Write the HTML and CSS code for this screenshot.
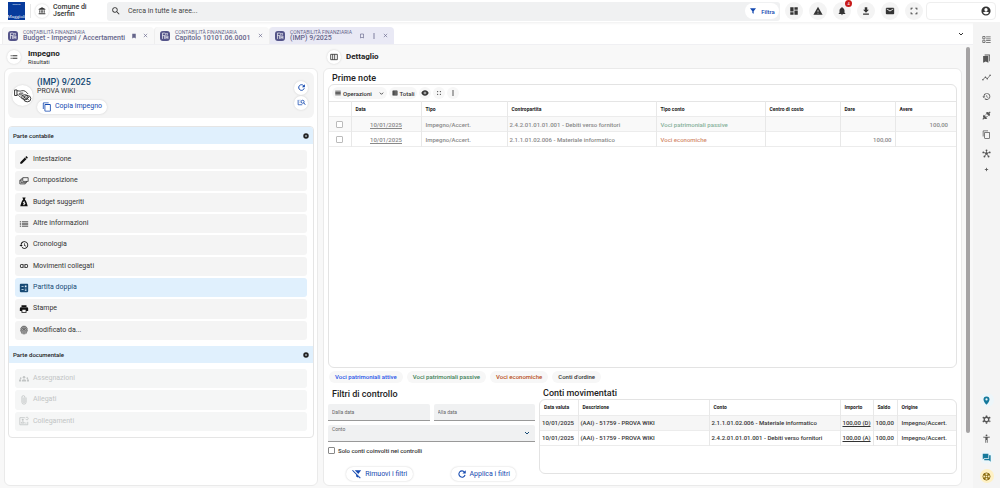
FILE: index.html
```html
<!DOCTYPE html>
<html lang="it">
<head>
<meta charset="utf-8">
<meta name="viewport" content="width=device-width, initial-scale=1">
<title>Impegno - Contabilità finanziaria</title>
<link rel="stylesheet" href="styles.css">
</head>
<body>
<svg class="defs" aria-hidden="true">
<symbol id="bank" viewBox="0 0 24 24"><path d="M4 10v7h3v-7H4zm6 0v7h4v-7h-4zM2 22h20v-3H2v3zm15-12v7h3v-7h-3zM12 1L2 6v2h20V6L12 1z"/></symbol>
<symbol id="search" viewBox="0 0 24 24"><path d="M15.5 14h-.79l-.28-.27A6.47 6.47 0 0 0 16 9.500 6.500 6.500 0 1 0 9.500 16c1.610 0 3.090-.59 4.230-1.570l.27.28v.79l5 4.990L20.490 19l-4.990-5zm-6 0C7.010 14 5 11.990 5 9.500S7.010 5 9.500 5 14 7.010 14 9.500 11.990 14 9.500 14z"/></symbol>
<symbol id="filter" viewBox="0 0 24 24"><path d="M3 4h18l-7 9v7l-4-2v-5z"/></symbol>
<symbol id="dash" viewBox="0 0 24 24"><path d="M3 13h8V3H3v10zm0 8h8v-6H3v6zm10 0h8V11h-8v10zm0-18v6h8V3h-8z"/></symbol>
<symbol id="warn" viewBox="0 0 24 24"><path d="M1 21h22L12 2 1 21zm12-3h-2v-2h2v2zm0-4h-2v-4h2v4z"/></symbol>
<symbol id="bell" viewBox="0 0 24 24"><path d="M12 22c1.100 0 2-.9 2-2h-4a2 2 0 0 0 2 2zm6-6v-5c0-3.070-1.640-5.640-4.500-6.320V4a1.500 1.500 0 0 0-3 0v.68C7.630 5.360 6 7.920 6 11v5l-2 2v1h16v-1l-2-2z"/></symbol>
<symbol id="down" viewBox="0 0 24 24"><path d="M19 9h-4V3H9v6H5l7 7 7-7zM5 18v3h14v-3H5z"/></symbol>
<symbol id="mail" viewBox="0 0 24 24"><path d="M20 4H4a2 2 0 0 0-2 2v12c0 1.100.9 2 2 2h16a2 2 0 0 0 2-2V6a2 2 0 0 0-2-2zm0 4l-8 5-8-5V6l8 5 8-5v2z"/></symbol>
<symbol id="full" viewBox="0 0 24 24"><path d="M4 9V4h5v2H6v3zm11-5h5v5h-2V6h-3zM4 15h2v3h3v2H4zm14 0h2v5h-5v-2h3z"/></symbol>
<symbol id="user" viewBox="0 0 24 24"><path fill-rule="evenodd" d="M12 1a11 11 0 1 0 0 22 11 11 0 0 0 0-22zm0 4a4 4 0 1 1 0 8 4 4 0 0 1 0-8zm0 15c-3 0-5.500-1.500-7-3.600C5 14.500 9.500 14 12 14s7 .5 7 2.400A8.500 8.500 0 0 1 12 20z"/></symbol>
<symbol id="app" viewBox="0 0 24 24"><rect width="24" height="24" rx="7"/><path d="M6 19V5h5a3 3 0 0 1 0 6H6m5 0v8M14 19v-7h5v7m-5-3h5M15 6h3v3" fill="none" stroke="#fff" stroke-width="1.600"/></symbol>
<symbol id="mark" viewBox="0 0 24 24"><path d="M5 3h14v19l-7-4-7 4z"/></symbol>
<symbol id="marko" viewBox="0 0 24 24"><path d="M6 4h12v16l-6-3-6 3z" fill="none" stroke="currentColor" stroke-width="2.500"/></symbol>
<symbol id="x" viewBox="0 0 24 24"><path d="M4 4l16 16M20 4L4 20" stroke="currentColor" stroke-width="3"/></symbol>
<symbol id="dots" viewBox="0 0 24 24"><circle cx="12" cy="4" r="3"/><circle cx="12" cy="12" r="3"/><circle cx="12" cy="20" r="3"/></symbol>
<symbol id="chev" viewBox="0 0 24 24"><path d="M4 8l8 8 8-8" fill="none" stroke="currentColor" stroke-width="4"/></symbol>
<symbol id="list" viewBox="0 0 24 24"><path d="M2 6h3v2H2zm0 5h3v2H2zm0 5h3v2H2zM7 6h15v2H7zm0 5h15v2H7zm0 5h15v2H7z"/></symbol>
<symbol id="menu" viewBox="0 0 24 24"><path d="M1 3h22v2.500H1zm0 5h22v2.500H1zm0 5h22v2.500H1zm0 5h22v2.500H1z"/></symbol>
<symbol id="cols" viewBox="0 0 24 24"><path d="M2 4h20v16H2zM8 4v16M14 4v16" fill="none" stroke="currentColor" stroke-width="2.500"/></symbol>
<symbol id="hand" viewBox="0 0 24 24"><g fill="none" stroke="#333" stroke-width="1.200"><path d="M2 5h3v7H2zM5 6c2 0 4 1 6 0 4-1 6 2 8 4M5 11c3 0 3 3 7 5m1-7H9c-2 0-1 3 1 2l3 1"/><ellipse cx="15" cy="14" rx="4" ry="3"/><ellipse cx="18" cy="16" rx="4.500" ry="4"/><path d="M16 14l4 4M20 14l-4 4M13 13l3 3"/></g></symbol>
<symbol id="copy" viewBox="0 0 24 24"><path d="M16 1H4a2 2 0 0 0-2 2v14h2V3h12V1zm3 4H8a2 2 0 0 0-2 2v14c0 1.100.9 2 2 2h11a2 2 0 0 0 2-2V7a2 2 0 0 0-2-2zm0 16H8V7h11v14z"/></symbol>
<symbol id="fresh" viewBox="0 0 24 24"><path d="M18 7.500A7.500 7.500 0 1 0 19.300 14" fill="none" stroke="currentColor" stroke-width="2.600"/><path d="M21 3v8h-8z"/></symbol>
<symbol id="find" viewBox="0 0 24 24"><path d="M3 5v13M7 6h2M7 11h2M3 18h11" fill="none" stroke="currentColor" stroke-width="2"/><circle cx="15" cy="10" r="4" fill="none" stroke="currentColor" stroke-width="2.200"/><path d="M18 13l4 5" stroke="currentColor" stroke-width="2.500"/></symbol>
<symbol id="minus" viewBox="0 0 24 24"><path fill-rule="evenodd" d="M12 1a11 11 0 1 0 0 22 11 11 0 0 0 0-22zM8 10h8v4H8z"/></symbol>
<symbol id="pen" viewBox="0 0 24 24"><path d="M3 17.250V21h3.750L17.810 9.940l-3.750-3.750L3 17.250zM20.710 7.040a1 1 0 0 0 0-1.410l-2.340-2.340a1 1 0 0 0-1.410 0l-1.830 1.830 3.750 3.750 1.830-1.830z"/></symbol>
<symbol id="layers" viewBox="0 0 24 24"><path d="M9 4h13v9H9zM9 7H5v9h13v-3M5 10H2v9h13v-3" fill="none" stroke="currentColor" stroke-width="1.600"/></symbol>
<symbol id="bag" viewBox="0 0 24 24"><path fill-rule="evenodd" d="M8 1h8l-2 5c3 3 5 8 7 16H3C5 14 7 9 10 6zm4 9l-3 4 3 1-3 3h2v2h2v-2l3-2-3-2 2-2z"/></symbol>
<symbol id="hist" viewBox="0 0 24 24"><path d="M13 3a9 9 0 0 0-9 9H1l3.890 3.890.07.14L9 12H6a7 7 0 1 1 2.060 4.940l-1.420 1.420A9 9 0 1 0 13 3zm-1 5v5l4.280 2.540.72-1.210-3.500-2.080V8H12z"/></symbol>
<symbol id="link" viewBox="0 0 24 24"><path d="M3.900 12A3.100 3.100 0 0 1 7 8.900h4V7H7a5 5 0 0 0 0 10h4v-1.900H7A3.100 3.100 0 0 1 3.900 12zM8 13h8v-2H8v2zm9-6h-4v1.900h4a3.100 3.100 0 0 1 0 6.200h-4V17h4a5 5 0 0 0 0-10z"/></symbol>
<symbol id="calc" viewBox="0 0 24 24"><path fill-rule="evenodd" d="M4 2h16a2 2 0 0 1 2 2v16a2 2 0 0 1-2 2H4a2 2 0 0 1-2-2V4a2 2 0 0 1 2-2zm2 5v2h5V7zm8-1v4h4V6zm-8 9v2h5v-2zm8-1v1.500h4V14zm0 3v1.500h4V17z"/></symbol>
<symbol id="print" viewBox="0 0 24 24"><path fill-rule="evenodd" d="M19 8H5a3 3 0 0 0-3 3v6h4v4h12v-4h4v-6a3 3 0 0 0-3-3zm-3 11H8v-5h8v5zM18 3H6v4h12V3z"/></symbol>
<symbol id="finger" viewBox="0 0 24 24"><ellipse cx="12" cy="12" rx="9" ry="11" opacity=".3"/><path d="M4 9c3-7 13-7 16 0M4 15c0-10 16-10 16 0M7 20c-2-13 12-13 10 0M12 22V12" fill="none" stroke="currentColor" stroke-width="1"/></symbol>
<symbol id="group" viewBox="0 0 24 24"><circle cx="12" cy="8" r="3"/><circle cx="4" cy="10" r="2"/><circle cx="20" cy="10" r="2"/><path d="M7 18v-3c2-3 8-3 10 0v3zM0 18v-3c0-2 3-3 5-2v5zm24 0v-3c0-2-3-3-5-2v5z"/></symbol>
<symbol id="clip" viewBox="0 0 24 24"><path d="M17 6v11a5 5 0 0 1-10 0V5a3.500 3.500 0 0 1 7 0v11a2 2 0 0 1-4 0V6" fill="none" stroke="currentColor" stroke-width="2"/></symbol>
<symbol id="card" viewBox="0 0 24 24"><path d="M14 4H2v17h19v-7M5 17c0-4 8-4 8 0zM15 17h3M16 5c2-4 6-2 6 1s-4 5-6 1" fill="none" stroke="currentColor" stroke-width="2"/><circle cx="9" cy="9" r="2.500"/></symbol>
<symbol id="eye" viewBox="0 0 24 24"><path fill-rule="evenodd" d="M12 4C7 4 3 7 1 12c2 5 6 8 11 8s9-3 11-8c-2-5-6-8-11-8zm0 4a4 4 0 1 1 0 8 4 4 0 0 1 0-8z"/><circle cx="12" cy="12" r="2.500"/></symbol>
<symbol id="nofilter" viewBox="0 0 24 24"><path d="M6 3h16l-7 9v9l-5-3v-6z"/><path d="M3 2l18 19" stroke="#fff" stroke-width="4"/><path d="M1 3l19 19" stroke="currentColor" stroke-width="2.500"/></symbol>
<symbol id="tasks" viewBox="0 0 24 24"><path d="M2 4h6v6H2zM2 14h6v6H2z" fill="none" stroke="currentColor" stroke-width="2"/><path d="M11 4h12v2H11zm0 5h12v2H11zm0 5h12v2H11zm0 5h12v2H11z"/></symbol>
<symbol id="marks" viewBox="0 0 24 24"><path d="M7 1h14v18h-2V4H7zM3 5h14v18l-7-3-7 3z"/></symbol>
<symbol id="trend" viewBox="0 0 24 24"><path d="M2 18l7-7 5 4 8-9" fill="none" stroke="currentColor" stroke-width="2"/><circle cx="2.500" cy="18" r="2"/><circle cx="9" cy="11" r="2"/><circle cx="14" cy="15" r="2"/><circle cx="21.500" cy="6" r="2"/></symbol>
<symbol id="plug" viewBox="0 0 24 24"><path d="M5 10l9 9c-3 3-6 3-8 1l-3 3-2-2 3-3c-2-2-2-5 1-8zM10 5c3-3 6-3 8-1l3-3 2 2-3 3c2 2 2 5-1 8z"/><path d="M8 12l3-3M12 16l3-3" stroke="currentColor" stroke-width="2.500"/></symbol>
<symbol id="hub" viewBox="0 0 24 24"><path d="M12 12V4M12 12L4 9M12 12l8-3M12 12l-5 8M12 12l5 8" stroke="currentColor" stroke-width="2"/><circle cx="12" cy="12" r="3.500"/><circle cx="12" cy="3.500" r="2.500"/><circle cx="3.500" cy="9" r="2.500"/><circle cx="20.500" cy="9" r="2.500"/><circle cx="6.500" cy="20" r="2.500"/><circle cx="17.500" cy="20" r="2.500"/></symbol>
<symbol id="plus" viewBox="0 0 24 24"><path d="M12 4v16M4 12h16" stroke="currentColor" stroke-width="4"/></symbol>
<symbol id="pin" viewBox="0 0 24 24"><path fill-rule="evenodd" d="M12 1a8 8 0 0 0-8 8c0 6 8 14 8 14s8-8 8-14a8 8 0 0 0-8-8zm0 5a3 3 0 1 1 0 6 3 3 0 0 1 0-6z"/></symbol>
<symbol id="gear" viewBox="0 0 24 24"><circle cx="12" cy="12" r="6" fill="none" stroke="currentColor" stroke-width="3.500"/><path d="M10 1h4v4h-4zm0 18h4v4h-4zM1 8l2-4 4 3-2 3zm18 9l2 3 2-4-3-2zM21 4l2 4-3 2-3-3zM1 16l2 4 4-3-2-3z"/></symbol>
<symbol id="person" viewBox="0 0 24 24"><circle cx="12" cy="3.500" r="2.500"/><path d="M3 7h18v2l-6 1v13h-2v-7h-2v7H9V10L3 9z"/></symbol>
<symbol id="chat" viewBox="0 0 24 24"><path d="M2 2h15v11H6l-4 4zM19 6h4v17l-4-4H6v-4h13z"/></symbol>
<symbol id="wheel" viewBox="0 0 24 24"><circle cx="12" cy="12" r="9.500" fill="none" stroke="currentColor" stroke-width="2.500"/><circle cx="12" cy="12" r="3" fill="none" stroke="currentColor" stroke-width="2"/><path d="M5 5l5 5M19 5l-5 5M5 19l5-5M19 19l-5-5" stroke="currentColor" stroke-width="4.500"/></symbol>
</svg>

<header class="topbar">
  <div class="logo"><small>GRUPPO</small><b>Maggioli</b></div>
  <div class="entity"><span class="round"><svg class="icon small"><use href="#bank"/></svg></span><strong>Comune di<br>Jserfin</strong></div>
  <div class="search"><svg class="icon"><use href="#search"/></svg><input type="search" aria-label="Cerca" placeholder="Cerca in tutte le aree..."><button class="filter"><svg class="icon small"><use href="#filter"/></svg>Filtra</button></div>
  <nav class="tools" aria-label="Strumenti">
    <button class="round" aria-label="Cruscotto"><svg class="icon"><use href="#dash"/></svg></button>
    <button class="round" aria-label="Avvisi"><svg class="icon"><use href="#warn"/></svg></button>
    <button class="round alert" aria-label="Notifiche"><svg class="icon"><use href="#bell"/></svg><span class="badge">4</span></button>
    <button class="round" aria-label="Scarica"><svg class="icon"><use href="#down"/></svg></button>
    <button class="round" aria-label="Posta"><svg class="icon"><use href="#mail"/></svg></button>
    <button class="round" aria-label="Schermo intero"><svg class="icon"><use href="#full"/></svg></button>
  </nav>
  <button class="account" aria-label="Utente"><svg class="icon"><use href="#user"/></svg></button>
</header>

<div class="shell">
<div class="work">
  <nav class="tabs" aria-label="Schede">
    <div class="tab wide"><svg class="app"><use href="#app"/></svg><a href="#budget"><small>CONTABILITÀ FINANZIARIA</small><b>Budget - Impegni / Accertamenti</b></a><button aria-label="Segnalibro"><svg class="icon tiny"><use href="#mark"/></svg></button><button aria-label="Chiudi"><svg class="icon mini"><use href="#x"/></svg></button></div>
    <div class="tab"><svg class="app"><use href="#app"/></svg><a href="#capitolo"><small>CONTABILITÀ FINANZIARIA</small><b>Capitolo 10101.06.0001</b></a><button aria-label="Chiudi"><svg class="icon mini"><use href="#x"/></svg></button></div>
    <div class="tab active"><svg class="app"><use href="#app"/></svg><a href="#imp"><small>CONTABILITÀ FINANZIARIA</small><b>(IMP) 9/2025</b></a><button aria-label="Segnalibro"><svg class="icon tiny"><use href="#marko"/></svg></button><button aria-label="Altro"><svg class="icon tiny"><use href="#dots"/></svg></button><button aria-label="Chiudi"><svg class="icon mini"><use href="#x"/></svg></button></div>
    <button class="more" aria-label="Altre schede"><svg class="icon tiny"><use href="#chev"/></svg></button>
  </nav>

  <main class="page">
  <div class="split">
    <section class="side">
      <div class="heading"><button class="round" aria-label="Elenco"><svg class="icon"><use href="#list"/></svg></button><div><h1>Impegno</h1><p>Risultati</p></div></div>
      <div class="panel side-panel">
        <div class="record">
          <span class="round avatar"><svg><use href="#hand"/></svg></span>
          <div class="info"><h2>(IMP) 9/2025</h2><p>PROVA WIKI</p><button class="pill"><svg class="icon"><use href="#copy"/></svg>Copia impegno</button></div>
          <div class="actions"><button class="round" aria-label="Aggiorna"><svg class="icon"><use href="#fresh"/></svg></button><button class="round" aria-label="Trova"><svg class="icon"><use href="#find"/></svg></button></div>
        </div>
        <div class="accordion">
          <button class="group">Parte contabile<svg class="icon small"><use href="#minus"/></svg></button>
          <div class="entries nine">
            <a href="#intestazione"><svg class="icon"><use href="#pen"/></svg>Intestazione</a>
            <a href="#composizione"><svg class="icon"><use href="#layers"/></svg>Composizione</a>
            <a href="#suggeriti"><svg class="icon"><use href="#bag"/></svg>Budget suggeriti</a>
            <a href="#altre"><svg class="icon"><use href="#list"/></svg>Altre informazioni</a>
            <a href="#cronologia"><svg class="icon"><use href="#hist"/></svg>Cronologia</a>
            <a href="#movimenti"><svg class="icon"><use href="#link"/></svg>Movimenti collegati</a>
            <a href="#partita" class="current"><svg class="icon"><use href="#calc"/></svg>Partita doppia</a>
            <a href="#stampe"><svg class="icon"><use href="#print"/></svg>Stampe</a>
            <a href="#modificato"><svg class="icon"><use href="#finger"/></svg>Modificato da...</a>
          </div>
          <button class="group">Parte documentale<svg class="icon small"><use href="#minus"/></svg></button>
          <div class="entries three">
            <a href="#assegnazioni"><svg class="icon"><use href="#group"/></svg>Assegnazioni</a>
            <a href="#allegati"><svg class="icon"><use href="#clip"/></svg>Allegati</a>
            <a href="#collegamenti"><svg class="icon"><use href="#card"/></svg>Collegamenti</a>
          </div>
        </div>
      </div>
    </section>

    <section class="detail">
      <div class="heading"><button class="round" aria-label="Colonne"><svg class="icon"><use href="#cols"/></svg></button><h1>Dettaglio</h1></div>
      <div class="panel detail-panel">
        <h2>Prime note</h2>
        <div class="box notes">
          <div class="toolbar">
            <button class="ops"><svg class="icon tiny"><use href="#menu"/></svg>Operazioni<svg class="icon mini end"><use href="#chev"/></svg></button>
            <button class="totals"><svg class="icon tiny"><use href="#calc"/></svg>Totali</button>
            <button aria-label="Mostra"><svg class="icon small"><use href="#eye"/></svg></button>
            <button aria-label="Espandi"><svg class="icon tiny"><use href="#full"/></svg></button>
            <button aria-label="Altro"><svg class="icon tiny"><use href="#dots"/></svg></button>
          </div>
          <table>
            <colgroup><col class="c-check"><col class="c-date"><col class="c-type"><col><col class="c-kind"><col class="c-cost"><col class="c-debit"><col class="c-credit"></colgroup>
            <thead><tr><th></th><th>Data</th><th>Tipo</th><th>Contropartita</th><th>Tipo conto</th><th>Centro di costo</th><th>Dare</th><th>Avere</th></tr></thead>
            <tbody>
              <tr><td class="center"><input type="checkbox" aria-label="Seleziona riga 1"></td><td class="center"><a href="#n1">10/01/2025</a></td><td>Impegno/Accert.</td><td class="code">2.4.2.01.01.01.001 - Debiti verso fornitori</td><td class="green">Voci patrimoniali passive</td><td></td><td></td><td class="num">100,00</td></tr>
              <tr><td class="center"><input type="checkbox" aria-label="Seleziona riga 2"></td><td class="center"><a href="#n2">10/01/2025</a></td><td>Impegno/Accert.</td><td class="code">2.1.1.01.02.006 - Materiale informatico</td><td class="orange">Voci economiche</td><td></td><td class="num tight">100,00</td><td></td></tr>
            </tbody>
          </table>
        </div>
        <div class="chips"><span class="blue">Voci patrimoniali attive</span><span class="green">Voci patrimoniali passive</span><span class="orange">Voci economiche</span><span>Conti d'ordine</span></div>
        <div class="lower">
          <form class="filters">
            <h2>Filtri di controllo</h2>
            <div class="dates"><input type="text" aria-label="Dalla data" placeholder="Dalla data"><input type="text" aria-label="Alla data" placeholder="Alla data"></div>
            <div class="select"><label for="conto">Conto</label><select id="conto"><option></option></select><svg class="icon"><use href="#chev"/></svg></div>
            <label class="check"><input type="checkbox">Solo conti coinvolti nei controlli</label>
            <div class="buttons"><button type="button" class="pill"><svg class="icon"><use href="#nofilter"/></svg>Rimuovi i filtri</button><button type="button" class="pill"><svg class="icon"><use href="#fresh"/></svg>Applica i filtri</button></div>
          </form>
          <div class="moved">
            <h2>Conti movimentati</h2>
            <div class="box accounts">
              <table>
                <colgroup><col class="a-date"><col><col><col class="a-amount"><col class="a-balance"><col class="a-origin"></colgroup>
                <thead><tr><th>Data valuta</th><th>Descrizione</th><th>Conto</th><th>Importo</th><th>Saldo</th><th>Origine</th></tr></thead>
                <tbody>
                  <tr><td>10/01/2025</td><td>(AAI) - 51759 - PROVA WIKI</td><td>2.1.1.01.02.006 - Materiale informatico</td><td><a href="#m1">100,00 (D)</a></td><td>100,00</td><td class="origin">Impegno/Accert.</td></tr>
                  <tr><td>10/01/2025</td><td>(AAI) - 51759 - PROVA WIKI</td><td>2.4.2.01.01.01.001 - Debiti verso fornitori</td><td><a href="#m2">100,00 (A)</a></td><td>100,00</td><td class="origin">Impegno/Accert.</td></tr>
                </tbody>
              </table>
            </div>
          </div>
        </div>
      </div>
    </section>
  </div>
  <div class="track"><div class="thumb"></div></div>
  </main>
</div>
<aside class="rail">
  <button aria-label="Attività"><svg class="icon"><use href="#tasks"/></svg></button>
  <button aria-label="Segnalibri"><svg class="icon"><use href="#marks"/></svg></button>
  <button aria-label="Andamento"><svg class="icon"><use href="#trend"/></svg></button>
  <button aria-label="Cronologia"><svg class="icon"><use href="#hist"/></svg></button>
  <button aria-label="Connessioni"><svg class="icon"><use href="#plug"/></svg></button>
  <button aria-label="Copia"><svg class="icon"><use href="#copy"/></svg></button>
  <button aria-label="Rete"><svg class="icon"><use href="#hub"/></svg></button>
  <button class="add" aria-label="Aggiungi"><svg class="icon mini"><use href="#plus"/></svg></button>
  <button class="push teal" aria-label="Posizione"><svg class="icon"><use href="#pin"/></svg></button>
  <button aria-label="Impostazioni"><svg class="icon"><use href="#gear"/></svg></button>
  <button aria-label="Accessibilità"><svg class="icon"><use href="#person"/></svg></button>
  <button class="teal" aria-label="Messaggi"><svg class="icon"><use href="#chat"/></svg></button>
  <button class="help" aria-label="Assistenza"><svg class="icon"><use href="#wheel"/></svg></button>
</aside>
</div>
</body>
</html>
```

FILE: styles.css
```css
* { box-sizing: border-box; }
body { margin: 0; min-height: 100vh; display: flex; flex-direction: column; background: #fff; color: #333; font: 7px/9px Roboto, "Liberation Sans", sans-serif; }
h1, h2, p { margin: 0; }
h1 { font-size: 8px; line-height: 9px; font-weight: 700; color: #222; }
h2 { font-size: 9px; line-height: 12px; font-weight: 500; color: #222; }
button, input, select { font: inherit; color: inherit; margin: 0; }
button { border: 0; padding: 0; background: none; display: inline-flex; align-items: center; justify-content: center; cursor: pointer; white-space: nowrap; }
a { color: inherit; }
.defs { position: absolute; width: 0; height: 0; }
.icon { width: 10px; height: 10px; flex: none; fill: currentColor; display: block; }
.icon.small { width: 8px; height: 8px; }
.icon.tiny { width: 6px; height: 6px; }
.icon.mini { width: 5px; height: 5px; }
.round { display: flex; align-items: center; justify-content: center; width: 14px; height: 14px; border-radius: 50%; background: #fff; box-shadow: 0 0 2px #ccc; flex: none; }

.topbar { display: flex; align-items: center; height: 22px; padding: 0 4px 0 8px; background: #fff; position: relative; }
.logo { width: 17px; height: 18px; background: #073b9c; color: #fff; display: flex; flex-direction: column; justify-content: space-between; align-items: center; overflow: hidden; }
.logo small { font-size: 2px; line-height: 5px; }
.logo b { font: 5px/6px "Liberation Serif", serif; }
.entity { display: flex; align-items: center; gap: 4px; margin-left: 5px; padding-left: 4px; width: 77px; border-left: 1px solid #e8e8e8; }
.entity strong { font-size: 7px; line-height: 7px; font-weight: 500; }
.search { flex: 1; display: flex; align-items: center; height: 19px; padding: 0 1px 0 4px; background: #f0f1f2; border-radius: 3px; }
.search input { flex: 1; border: 0; background: none; padding: 0 0 0 7px; outline: 0; }
.search input::placeholder { color: #444; opacity: 1; }
.filter { width: 34px; height: 16px; gap: 4px; border-radius: 8px; background: #fff; color: #1449b0; font-weight: 500; font-size: 6px; }
.tools { display: flex; gap: 6px; margin: 0 3px 0 5px; }
.tools .round { width: 18px; height: 18px; background: #f4f4f4; box-shadow: none; }
.alert { position: relative; }
.badge { position: absolute; right: -1px; top: -2px; width: 7px; height: 7px; border-radius: 50%; background: #c71a1a; color: #fff; font-size: 4px; line-height: 7px; text-align: center; }
.account { width: 70px; height: 18px; border-radius: 4px; border: 1px solid #eee; justify-content: flex-end; padding-right: 4px; background: #fff; }

.shell { flex: 1; display: flex; }
.work { flex: 1; min-width: 0; display: flex; flex-direction: column; box-shadow: inset 0 3px 3px -2px #eee; }
.tabs { display: flex; height: 23px; padding: 5px 0 0 2px; border-bottom: 1px solid #f0f0f3; }
.tab { display: flex; align-items: center; gap: 5px; width: 115px; padding: 0 6px 0 5px; background: #f8f8f8; color: #65658a; border-left: 1px solid #eee; border-radius: 4px 4px 0 0; }
.tab.wide { width: 152px; }
.tab.active { width: 125px; background: #e9e9f5; }
.tab a { text-decoration: none; flex: 1; white-space: nowrap; }
.tab small { display: block; font-size: 5px; line-height: 6px; }
.tab b { display: block; font-size: 7px; line-height: 7px; font-weight: 500; }
.app { width: 10px; height: 10px; fill: #55558a; flex: none; }
.tab.wide button:last-child, .tab button + button { margin-left: 1px; }
.more { margin: 0 9px 4px auto; }

.page { flex: 1; display: flex; background: #f8f8f8; padding: 0 2px 2px 4px; }
.split { flex: 1; min-width: 0; display: grid; grid-template-columns: minmax(0, 314fr) minmax(0, 639fr); gap: 5px; }
.side, .detail { display: flex; flex-direction: column; }
.heading { height: 23px; display: flex; align-items: center; gap: 5px; padding: 0 3px; }
.heading .icon { width: 8px; height: 8px; }
.side .heading { gap: 7px; }
.detail .heading { padding-left: 4px; }
.heading p { font-size: 6px; line-height: 7px; }
.panel { flex: 1; background: #fff; border: 1px solid #eaeaea; border-radius: 6px; }
.side-panel { padding: 3px; }
.record { display: flex; align-items: center; height: 46px; padding: 0 6px 0 4px; gap: 4px; background: #f4f4f4; border-radius: 6px; }
.avatar { width: 21px; height: 21px; }
.avatar svg { width: 19px; height: 19px; }
.info { flex: 1; display: flex; flex-direction: column; align-items: flex-start; }
.info h2 { line-height: 10px; color: #174a75; }
.info p { line-height: 9px; }
.info .pill { margin-top: 4px; padding: 0 5px; }
.actions { display: grid; gap: 1px; color: #1449b0; }
.actions .icon { width: 9px; height: 9px; }
.pill { height: 14px; gap: 3px; border-radius: 7px; background: #fff; box-shadow: 0 0 2px #ccc; color: #1449b0; }
.accordion { margin-top: 8px; border: 1px solid #e5e5e5; border-radius: 4px; overflow: hidden; }
.group { width: 100%; height: 17px; padding: 0 4px; justify-content: space-between; background: #e0f0fd; font-size: 6px; font-weight: 500; color: #222; }
.group .icon { width: 6px; height: 6px; }
.entries { display: flex; flex-direction: column; gap: 2px; padding: 6px; }
.nine { min-height: 202px; }
.three { min-height: 74px; }
.entries a { flex: 1; display: flex; align-items: center; gap: 4px; padding: 0 4px; border-radius: 3px; background: #f4f4f4; text-decoration: none; }
.entries .icon { color: #111; }
.entries .current, .current .icon { background: #e0f0fd; color: #174a75; }
.three a { background: #f5f6f6; color: #c2c5c5; }
.three .icon { color: #c2c5c5; }

.detail-panel { display: flex; flex-direction: column; padding: 3px 4px; }
.detail-panel > h2, .moved h2 { padding-left: 4px; }
.box { border: 1px solid #e3e3e3; border-radius: 6px; overflow: hidden; }
.notes { flex: 1; }
.toolbar { display: flex; gap: 2px; align-items: center; height: 16px; padding: 0 3px; }
.toolbar button { min-width: 12px; height: 12px; border-radius: 6px; background: #f7f7f7; font-size: 6px; font-weight: 500; gap: 2px; padding: 0 2px; }
.toolbar .ops { width: 55px; }
.toolbar .totals { width: 28px; }
.ops .end { margin-left: 5px; }
table { width: 100%; border-collapse: collapse; table-layout: fixed; border-top: 1px solid #e5e5e5; }
tr { height: 15px; border-bottom: 1px solid #ececec; }
th, td { padding: 0 4px; border-right: 1px solid #e8e8e8; overflow: hidden; white-space: nowrap; }
th { font-size: 5px; font-weight: 700; text-align: left; color: #222; }
td { font-size: 6px; font-weight: 500; color: #888; }
th:last-child, td:last-child { border-right: 0; }
tbody tr:first-child { background: #f9f9f9; }
td.code { padding-left: 2px; }
td.green { color: #86b09a; }
td.orange { color: #d38a6c; }
.center { text-align: center; }
td.num { text-align: right; padding-right: 8px; }
td.tight { padding-right: 3px; }
.c-check { width: 22px; }
.c-date { width: 70px; }
.c-type { width: 86px; }
.c-kind { width: 109px; }
.c-cost { width: 75px; }
.c-debit { width: 55px; }
.c-credit { width: 61px; }
input[type="checkbox"] { appearance: none; width: 7px; height: 7px; border: 1px solid #888; border-radius: 1px; background: #fff; display: block; flex: none; }
td input[type="checkbox"] { margin: 0 auto; border-color: #bbb; }
.chips { display: flex; gap: 3px; padding: 3px 1px 0; }
.chips span { height: 12px; padding: 0 6px; line-height: 12px; border-radius: 6px; background: #f7f7f7; font-size: 6px; font-weight: 500; }
.chips .blue { color: #2754e8; }
.chips .green { color: #3b8056; }
.chips .orange { color: #b84d18; }
.chips span + span { margin-left: 1px; }
.lower { display: grid; grid-template-columns: minmax(0, 207fr) minmax(0, 418fr); gap: 4px; padding-top: 5px; min-height: 99px; }
.filters h2 { padding-left: 4px; }
.filters { display: flex; flex-direction: column; }
.dates { display: grid; grid-template-columns: 1fr 1fr; gap: 4px; margin-top: 4px; }
.dates input { min-width: 0; height: 17px; border: 0; border-bottom: 1px solid #999; border-radius: 2px 2px 0 0; background: #f0f1f2; padding: 0 4px; font-size: 5px; }
.dates input::placeholder { color: #666; opacity: 1; }
.select { display: grid; height: 17px; margin-top: 4px; background: #f0f1f2; border-bottom: 1px solid #999; border-radius: 2px 2px 0 0; }
.select > * { grid-area: 1 / 1; }
.select label { padding-left: 4px; font-size: 5px; color: #666; }
.select select { width: 100%; border: 0; background: none; appearance: none; }
.select .icon { width: 6px; height: 6px; justify-self: end; align-self: center; margin-right: 5px; color: #174a75; pointer-events: none; }
.check { display: flex; gap: 3px; align-items: center; margin-top: 4px; font-size: 6px; font-weight: 500; }
.buttons { display: grid; grid-template-columns: 1fr 1fr; justify-items: center; margin-top: 12px; }
.buttons .pill { padding: 0 6px; }
.moved { display: flex; flex-direction: column; }
.moved h2 { line-height: 11px; }
.accounts { height: 75px; }
.accounts table { border-top: 0; }
.accounts td { color: #333; padding: 0 2px; }
.accounts .origin { padding-left: 4px; }
.accounts tbody tr:first-child { background: #f6f6f6; }
.a-date { width: 38px; }
.a-amount { width: 33px; }
.a-balance { width: 24px; }
.a-origin { width: 59px; }
.track { width: 9px; padding: 2px 0 0 4px; }
.thumb { width: 4px; height: 88%; background: #a5a3a4; border-radius: 2px; }

.rail { width: 27px; background: #f4f4f4; padding: 10px 0 5px; display: flex; flex-direction: column; align-items: center; gap: 5px; color: #555; }
.rail button { width: 14px; height: 14px; border-radius: 50%; }
.rail .icon { width: 9px; height: 9px; }
.rail .add { height: 9px; }
.rail .icon.mini { width: 5px; height: 5px; }
.rail .push { margin-top: auto; }
.rail .teal { color: #14799c; background: #edf6fa; }
.rail .help { color: #8a6c10; background: #fff1c4; }
```
